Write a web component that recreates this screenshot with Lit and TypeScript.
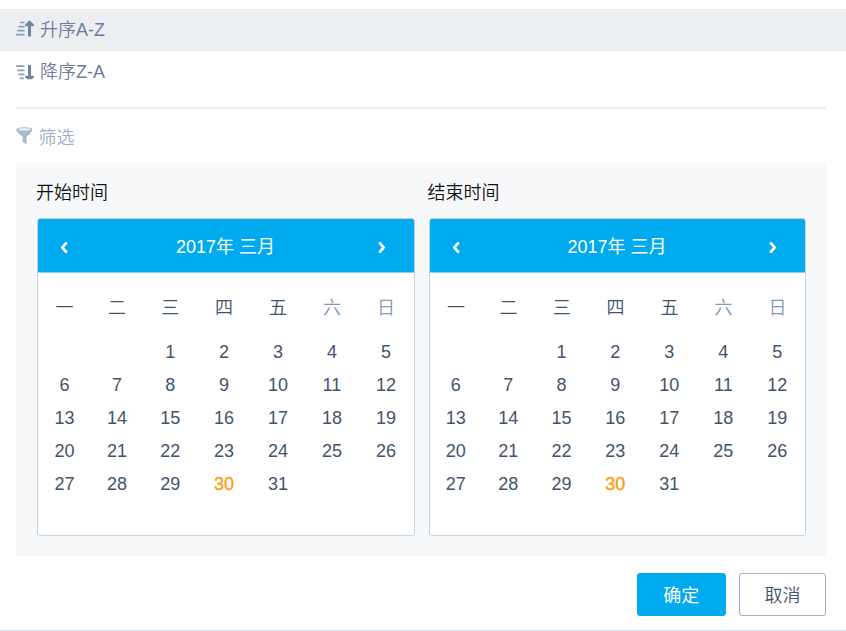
import { LitElement, html, svg, css } from "lit";
import { customElement, property } from "lit/decorators.js";
import { classMap } from "lit/directives/class-map.js";

const WEEKDAYS = ["一", "二", "三", "四", "五", "六", "日"];

@customElement("month-calendar")
class MonthCalendar extends LitElement {
  @property() title = "";
  @property({ type: Number }) offset = 2;
  @property({ type: Number }) days = 31;
  @property({ type: Number }) today = 30;

  static styles = css`
    :host {
      display: block;
      box-sizing: border-box;
      width: 377.2px;
      height: 318px;
      border: 1px solid #c6d3e1;
      border-radius: 3px;
      background: #fff;
      overflow: hidden;
      color: #42546a;
    }
    .head {
      display: flex;
      align-items: center;
      justify-content: space-between;
      height: 53px;
      padding: 0 28px 0 22px;
      background: #00aaef;
      border-bottom: 1px solid #82d1f3;
      color: #fff;
      font-weight: 400;
    }
    .name {
      line-height: 26px;
      padding: 3px 0 0 5px;
    }
    .arrow {
      display: block;
      width: 8px;
      height: 11px;
      margin-top: 4px;
    }
    .grid {
      display: grid;
      grid-template-columns: 52px 53px 53.5px 54px 54px 54px 54px;
      text-align: center;
    }
    .week {
      padding-top: 18px;
      height: 45px;
      line-height: 34px;
    }
    .weekend {
      color: #8599b3;
    }
    .dates {
      grid-auto-rows: 33px;
      line-height: 33px;
    }
    .today {
      color: #ff9a0c;
      -webkit-text-stroke: 0.35px #ff9a0c;
    }
  `;

  render() {
    const cells = [
      ...Array.from({ length: this.offset }, () => 0),
      ...Array.from({ length: this.days }, (_, i) => i + 1),
    ];
    return html`
      <div class="head">
        <svg class="arrow" viewBox="0 0 8 11" fill="none" stroke="#fff" stroke-width="2.7">
          <path d="M7.2 1.3 L5.9 1.3 L2.4 5.5 L5.9 9.7 L7.2 9.7" />
        </svg>
        <span class="name">${this.title}</span>
        <svg class="arrow" viewBox="0 0 8 11" fill="none" stroke="#fff" stroke-width="2.7">
          <path d="M0.8 1.3 L2.1 1.3 L5.6 5.5 L2.1 9.7 L0.8 9.7" />
        </svg>
      </div>
      <div class="grid week">
        ${WEEKDAYS.map((d, i) => html`<span class=${classMap({ weekend: i > 4 })}>${d}</span>`)}
      </div>
      <div class="grid dates">
        ${cells.map((n) => html`<span class=${classMap({ today: n === this.today })}>${n || ""}</span>`)}
      </div>
    `;
  }
}

@customElement("app-root")
class AppRoot extends LitElement {
  static styles = css`
    :host {
      display: flex;
      flex-direction: column;
      box-sizing: border-box;
      height: 631px;
      padding-top: 9px;
      background: #fff;
      border-bottom: 1px solid #d8e3ed;
      font: 350 18px "Liberation Sans", "Noto Sans CJK SC", sans-serif;
      overflow: hidden;
    }
    .item {
      display: flex;
      align-items: center;
      gap: 6px;
      height: 42px;
      padding-left: 16px;
      color: #6f7b9b;
    }
    .item span {
      padding-bottom: 4px;
    }
    .active {
      background: #ebeff2;
    }
    .icon {
      display: block;
      width: 18px;
      height: 18px;
    }
    .sort {
      margin-bottom: 2px;
    }
    .line {
      height: 2px;
      margin: 14px 20px 0 16px;
      background: #e6f1fa;
    }
    .filter {
      height: 54px;
      gap: 4.5px;
      color: #a2adcb;
    }
    .filter span {
      padding-bottom: 0;
    }
    .panel {
      display: flex;
      gap: 14.3px;
      box-sizing: border-box;
      height: 393px;
      margin: 0 20px 0 16px;
      padding: 17px 0 0 21.4px;
      background: #f6f8fa;
    }
    .label {
      height: 38px;
      line-height: 26px;
      margin-left: -1.4px;
      color: #111;
    }
    .actions {
      display: flex;
      justify-content: flex-end;
      gap: 13.5px;
      padding: 17px 20px 0 0;
    }
    button {
      box-sizing: border-box;
      width: 87px;
      height: 43px;
      padding: 0 0 2px;
      border: 1px solid #9fb1c8;
      border-radius: 3px;
      background: #fff;
      color: #42546a;
      font: inherit;
    }
    .ok {
      width: 88.5px;
      border-color: #00aaef;
      background: #00aaef;
      color: #fff;
      font-weight: 400;
    }
  `;

  private sortIcon(up: boolean) {
    const bars = up
      ? svg`<path d="M4 2.5H8.5M2.5 6.6H8.5M1.2 10.6H8.5M0 14.7H8.5" stroke="#8ca0b1" stroke-width="1.7" />
            <path d="M13.5 16.4V4" stroke="#6b87a0" stroke-width="3" />
            <path d="M13.5 0.2 L17.9 4.6 V6.3 H9.3 V4.6 Z" fill="#6b87a0" />`
      : svg`<path d="M0 4.2H8.5M1.2 8.3H8.5M2.5 12.3H8.5M4 16.4H7.8" stroke="#8ca0b1" stroke-width="1.7" />
            <path d="M13.5 3V15" stroke="#6b87a0" stroke-width="3" />
            <path d="M9.3 13.7 H17.9 V15.2 L15.9 17.3 H11.3 L9.3 15.2 Z" fill="#6b87a0" />`;
    return html`<svg class="icon sort" viewBox="0 0 18 18">${bars}</svg>`;
  }

  render() {
    return html`
      <div class="item active">${this.sortIcon(true)}<span>升序A-Z</span></div>
      <div class="item">${this.sortIcon(false)}<span>降序Z-A</span></div>
      <div class="line"></div>
      <div class="item filter">
        <svg class="icon" viewBox="0 0 18 18">
          <path d="M0.3 2.5 Q0.3 0.2 8.3 0.2 Q16.3 0.2 16.3 2.5 Q16.3 5 10.6 9.5 V17.5 L6.6 14.8 V9.5 Q0.3 5 0.3 2.5 Z" fill="#a9b9c8" />
          <ellipse cx="8.3" cy="2.4" rx="6.2" ry="1.1" fill="#eef3f7" />
        </svg>
        <span>筛选</span>
      </div>
      <div class="panel">
        ${["开始时间", "结束时间"].map(
          (t) => html`<div>
            <div class="label">${t}</div>
            <month-calendar title="2017年 三月"></month-calendar>
          </div>`
        )}
      </div>
      <div class="actions">
        <button class="ok">确定</button>
        <button>取消</button>
      </div>
    `;
  }
}
